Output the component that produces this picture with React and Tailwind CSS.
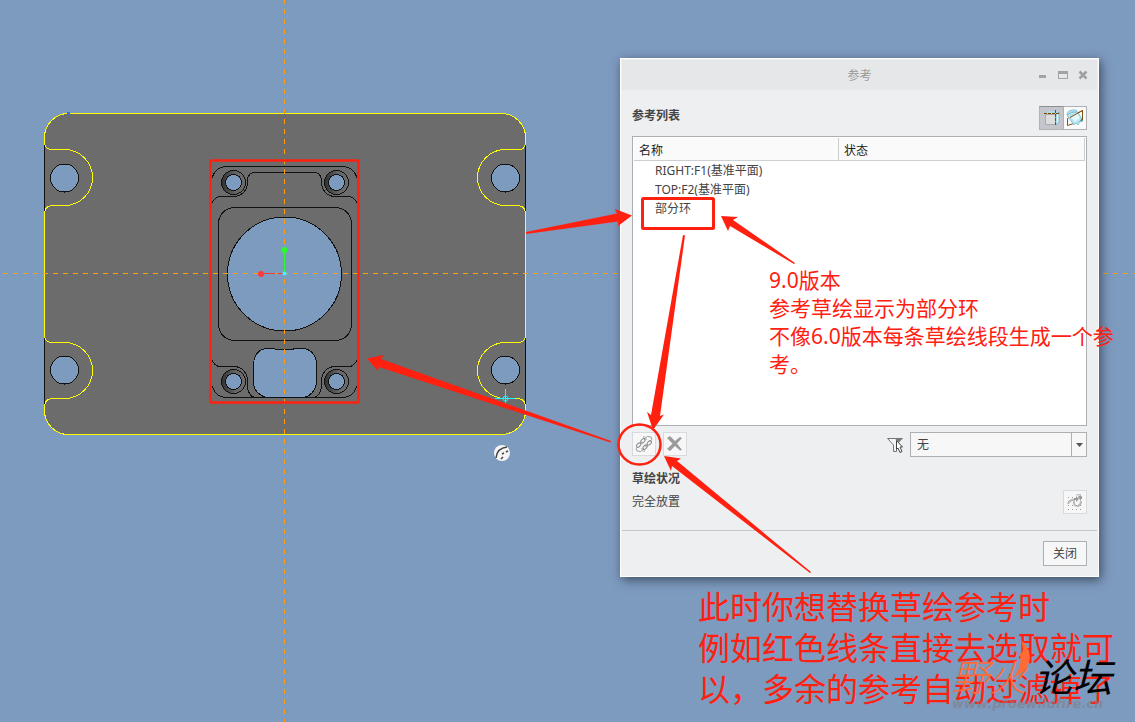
import { useState } from "react";

const references = [
  { name: "RIGHT:F1(基准平面)", status: "" },
  { name: "TOP:F2(基准平面)", status: "" },
  { name: "部分环", status: "" },
];

const SmallHole = ({ cx, cy }) => (
  <g stroke="#111111">
    <circle cx={cx} cy={cy} r="12" fill="url(#bore)" />
    <circle cx={cx} cy={cy} r="8" fill="#7d9abf" />
  </g>
);

// Left half of the inner part, the right half is the same path mirrored
const InnerHalf = () => (
  <g fill="none" stroke="#111111">
    <path d="M212 177.500Q216 166.500 226 166.500H285" />
    <path d="M212 203Q215 196.500 221 196.500H234A13.500 14 0 0 0 247.500 182.500V180Q248 172.500 255 172.500H285" />
    <path d="M212 360Q215 366.500 220 366.500H234A13.500 14 0 0 1 247.500 380.500V386Q248 396 255 397.500" />
    <path d="M212 386Q216 397.500 226 397.500H285" />
  </g>
);

const Plate = () => (
  <svg className="absolute left-0 top-0" width="1135" height="722" shapeRendering="crispEdges" aria-hidden="true">
    <defs>
      <linearGradient id="bore">
        <stop offset="0" stopColor="#303030" />
        <stop offset="0.6" stopColor="#666666" />
        <stop offset="1" stopColor="#6c6c6c" />
      </linearGradient>
    </defs>
    <rect x="44.5" y="113.5" width="481" height="321" rx="24" fill="#6c6c6c" stroke="#111111" />
    <g fill="#7d9abf" stroke="#111111">
      <circle cx="64.5" cy="178" r="14" />
      <circle cx="505.5" cy="178" r="14" />
      <circle cx="64.5" cy="370" r="14" />
      <circle cx="505.5" cy="370" r="14" />
    </g>
    <path
      d="M68.5 113.500H501.500A24 24 0 0 1 525.500 137.500V143Q525 149.500 519 149.500H505.500A28 28 0 0 0 505.500 205.500H518Q525 206 525.500 213V336Q525 342.500 518 342.500H505.500A28 28 0 0 0 505.500 398.500H518Q525 399 525.500 406V410.500A24 24 0 0 1 501.500 434.500H68.500A24 24 0 0 1 44.500 410.500V406Q45 399 52 398.500H64.500A28 28 0 0 0 64.500 342.500H52Q45 342 44.500 336V213Q45 206 52 205.500H64.500A28 28 0 0 0 64.500 149.500H52Q45 149 44.500 143V137.500A24 24 0 0 1 68.500 113.500Z"
      fill="none"
      stroke="#ffff00"
    />
    <path d="M67 112h3v3h-3z" fill="#4169e1" />

    <InnerHalf />
    <g transform="translate(569 0) scale(-1 1)">
      <InnerHalf />
    </g>
    <rect x="218.5" y="207.5" width="133" height="133" rx="16" fill="none" stroke="#111111" />
    <circle cx="284.5" cy="274" r="57" fill="#7d9abf" stroke="#111111" />
    <path
      d="M253.500 363Q255 350 266 348.500H272Q284 351 297 348.500H303Q315 350 316.500 363V384Q314 395 304 397.500H266Q255 394 253.500 384Z"
      fill="#7d9abf"
      stroke="#111111"
    />
    <SmallHole cx={233.5} cy={182.5} />
    <SmallHole cx={336.5} cy={182.5} />
    <SmallHole cx={233.5} cy={381.5} />
    <SmallHole cx={336.5} cy={381.5} />

    <g stroke="#ff9e0d" strokeDasharray="5 5">
      <path d="M284.500 -1V722" />
      <path d="M3 273.500H1135" />
    </g>
    <g shapeRendering="auto">
      <path d="M284.500 250V273" stroke="#2dfb2d" />
      <path d="M261 273.500H284" stroke="#fb3b3b" strokeDasharray="14 3" />
      <circle cx="284.500" cy="250" r="3" fill="#2dfb2d" />
      <circle cx="261" cy="274" r="3" fill="#fb3b3b" />
      <circle cx="284.500" cy="273.500" r="2" fill="#40f5ff" />
      <g fill="none" stroke="#22f2ff">
        <path d="M495 398.500H515M505.500 389V403" />
        <circle cx="505.500" cy="398.500" r="2.500" />
      </g>
      <circle cx="502" cy="453" r="8" fill="#f4f4f4" />
      <path d="M496 458Q497 448 507 447" fill="none" stroke="#444444" strokeWidth="1.500" />
      <path d="M501 459L503 457M502 454L504 453M506 452L508 451" stroke="#444444" strokeWidth="1.500" />
    </g>
  </svg>
);

const Markup = () => (
  <svg className="pointer-events-none absolute left-0 top-0" width="1135" height="722" aria-hidden="true">
    <g fill="none" stroke="#ff2010" strokeWidth="3" strokeLinejoin="round">
      <rect x="210.500" y="160.500" width="148" height="242" rx="1" strokeWidth="2.500" />
      <rect x="642.500" y="198.500" width="71" height="30" rx="1" />
      <ellipse cx="639.500" cy="444.500" rx="21" ry="20" strokeWidth="2.500" />
    </g>
    <g fill="#ff2010">
      <path d="M526 232L617 213.500L615 209L632 215.500L618 226L618 221.500L526 234Z" />
      <path d="M721 216L738 217L733 220L795 263L794 264L730 226L728 231Z" />
      <path d="M653 430L647 412L651 415L683 235L685 235.500L660 416L664 414.500Z" />
      <path d="M367 358.500L384 355L381 359L611 441L610.500 442.500L379 367L378 371Z" />
      <path d="M664 456L681 458.500L677 461L811 572L810 573L672 466L671 471Z" />
    </g>
  </svg>
);

const SketchRefIcon = () => (
  <svg width="18" height="18" viewBox="0 0 18 18" aria-hidden="true">
    <path d="M2 5L5 2H13L16 5V13L13 16Z" fill="#a9dcea" />
    <path d="M2.500 5.500H12.500V15.500H2.500Z" fill="#dddddd" stroke="#aaaaaa" />
    <path d="M13 6L16 3V13L13 16Z" fill="#d7f2f8" stroke="#5ba5bb" strokeWidth="0.600" />
    <path d="M1 4.500H17M12.500 1V17" stroke="#7a4b00" strokeDasharray="3 1" shapeRendering="crispEdges" />
  </svg>
);

const PlaneRefIcon = () => (
  <svg width="18" height="18" viewBox="0 0 18 18" aria-hidden="true">
    <path d="M1.500 9.500L16.500 1.500V11.500L1.500 16.500Z" fill="none" stroke="#80530f" />
    <path d="M1 5Q2 1 6 1H10L16 10V13L14 12L12 16L10 14L8 16L1 6Z" fill="#b5e5f2" stroke="#7ab9cc" strokeWidth="0.800" />
    <path d="M5 8L11 4L14 9L9 13Z" fill="#e3f8fc" />
    <path d="M1 6Q5 2 11 3" fill="none" stroke="#7ab9cc" />
    <path d="M4 8.500L16.500 1.500V11" fill="none" stroke="#80530f" />
    <path d="M14 12L16 9L16.500 12Z" fill="#2f8dab" />
  </svg>
);

const ReplaceIcon = () => (
  <svg width="18" height="18" viewBox="0 0 18 18" fill="none" stroke="#8b8b8b" aria-hidden="true">
    <g transform="rotate(-45 9 9)">
      <rect x="2" y="4.500" width="5" height="3" rx="1.500" />
      <rect x="8" y="4.500" width="5" height="3" rx="1.500" />
      <path d="M6 6H9M11 12H8" />
      <rect x="5" y="10.500" width="5" height="3" rx="1.500" />
      <rect x="11" y="10.500" width="5" height="3" rx="1.500" />
    </g>
    <path d="M9 4Q12 0 16 2Q18 4 15 7M9 1V4H12M9 14Q6 18 2 16Q0 14 2 12M9 17V14H6" strokeWidth="0.800" />
  </svg>
);

const RemoveIcon = () => (
  <svg width="16" height="16" viewBox="0 0 16 16" aria-hidden="true">
    <path d="M0 2L3 0L8 5L13 1L15 2L10 7.500L15 14L13 14.500L8 10L3 15L0 13L5.500 7.500Z" fill="#9b9b9b" />
  </svg>
);

const FilterIcon = () => (
  <svg width="18" height="18" viewBox="0 0 18 18" aria-hidden="true">
    <path d="M1.500 2.500H16L10.500 8V15.500H7.500V9Z" fill="#f4f4f4" stroke="#777777" />
    <path d="M8 2H17L13 6Z" fill="#777777" />
    <path d="M10.500 4.500L16.500 11H14L16 15.500L14 16.500L12 12L10.500 13.500Z" fill="#ffffff" stroke="#444444" />
  </svg>
);

const UpdateIcon = () => (
  <svg width="18" height="18" viewBox="0 0 18 18" aria-hidden="true">
    <path d="M2 4.500H9M2 8.500H6M2 12.500H17M2 16.500H17" stroke="#999999" strokeDasharray="1 3" />
    <path d="M2 11Q4 6 9 7M8 8Q7 13 12 13Q15 12 15 8" fill="none" stroke="#b8b8b8" strokeWidth="2" />
    <path d="M8 5H10V3L13 6L10 9V7H8ZM12 4L15 1V3H16V6H15V8Z" fill="#999999" />
    <path d="M10 2Q14 0 16 4" fill="none" stroke="#b8b8b8" />
  </svg>
);

const iconButton = "flex h-6 w-6 items-center justify-center border border-[#d7dade] bg-[#f7f7f7]";

const ReferencesDialog = () => {
  const [mode, setMode] = useState("sketch");

  return (
    <section
      aria-labelledby="dialog-title"
      className="absolute left-[620px] top-[58px] w-[479px] border border-white bg-[#eeeff1] p-px text-xs text-[#444444] shadow-[2px_3px_10px_rgba(0,0,0,0.5)]"
    >
      <header className="grid h-[30px] grid-cols-[1fr_auto_1fr] items-center bg-[#e6e7e8] text-[#999999]">
        <h1 id="dialog-title" className="col-start-2 pt-0.5">参考</h1>
        <div className="flex justify-end gap-1 pr-1.5">
          <button aria-label="最小化" className="flex h-4 w-4 items-center justify-center">
            <svg width="10" height="10"><path d="M1 5h7v3H1z" fill="#a3a3a3" /></svg>
          </button>
          <button aria-label="最大化" className="flex h-4 w-4 items-center justify-center">
            <svg width="10" height="10"><path d="M0 1h10v8H0zM1 4v4h8V4z" fill="#a3a3a3" fillRule="evenodd" /></svg>
          </button>
          <button aria-label="关闭窗口" className="flex h-4 w-4 items-center justify-center">
            <svg width="10" height="10"><path d="M1.500 1.500L8.500 8.500M8.500 1.500L1.500 8.500" stroke="#a0a0a0" strokeWidth="2.500" /></svg>
          </button>
        </div>
      </header>

      <div className="px-2.5 pt-4">
        <div className="flex items-start justify-between">
          <h2 id="list-title" className="font-bold leading-5">参考列表</h2>
          <div className="flex">
            <button
              aria-label="草绘参考"
              aria-pressed={mode === "sketch"}
              onClick={() => setMode("sketch")}
              className="flex h-6 w-[25px] items-center justify-center border border-[#b0b1b4] border-t-[#8f8f92] bg-[#c5c6cb]"
            >
              <SketchRefIcon />
            </button>
            <button
              aria-label="平面参考"
              aria-pressed={mode === "plane"}
              onClick={() => setMode("plane")}
              className="flex h-6 w-[23px] items-center justify-center border border-l-0 border-[#b0b1b4] bg-[#fafafa]"
            >
              <PlaneRefIcon />
            </button>
          </div>
        </div>

        <div className="mt-1.5 h-[290px] border border-[#adb0b3] bg-white p-px">
          <table aria-labelledby="list-title" className="w-full table-fixed border-separate border-spacing-0 text-left">
            <thead>
              <tr className="h-[23px] bg-[#fafafa] text-[#222222]">
                <th className="w-[205px] border-b border-r border-[#cccfd2] px-[5px] pt-1 font-normal">名称</th>
                <th className="border-b border-r border-[#cccfd2] px-[5px] pt-1 font-normal">状态</th>
              </tr>
            </thead>
            <tbody>
              {references.map((item) => (
                <tr key={item.name} className="h-[19px]">
                  <td className="pl-[21px]">{item.name}</td>
                  <td>{item.status}</td>
                </tr>
              ))}
            </tbody>
          </table>
        </div>

        <div className="mt-1.5 flex items-start justify-between">
          <div className="flex gap-[7px]">
            <button aria-label="替换" className={iconButton}>
              <ReplaceIcon />
            </button>
            <button aria-label="删除" className={iconButton}>
              <RemoveIcon />
            </button>
          </div>
          <div className="flex items-center gap-1.5">
            <label htmlFor="filter" aria-label="过滤器">
              <FilterIcon />
            </label>
            <div className="relative w-[177px]">
              <select
                id="filter"
                className="block h-[25px] w-full appearance-none rounded-none border border-[#adb0b3] bg-[#f7f7f7] pl-1.5"
              >
                <option>无</option>
              </select>
              <span className="pointer-events-none absolute inset-y-0 right-0 flex w-4 items-center justify-center border-x border-[#adb0b3]">
                <svg width="7" height="4"><path d="M0 0H7L3.500 4Z" fill="#555555" /></svg>
              </span>
            </div>
          </div>
        </div>

        <h2 className="mt-3 font-bold leading-5">草绘状况</h2>
        <div className="mt-px flex items-center justify-between">
          <p>完全放置</p>
          <button aria-label="更新" className={iconButton}>
            <UpdateIcon />
          </button>
        </div>
      </div>

      <footer className="mt-4 flex justify-end border-t border-[#c4c7ca] px-2.5 pb-[9px] pt-2.5">
        <button className="h-[25px] w-11 border border-[#adb0b3] bg-[#f7f7f7]">关闭</button>
      </footer>
    </section>
  );
};

const App = () => {
  return (
    <main className="relative min-h-screen overflow-hidden bg-[#7d9abf] font-['Noto_Sans','Noto_Sans_CJK_SC',sans-serif]">
      <Plate />
      <ReferencesDialog />
      <Markup />

      <p className="absolute left-[769px] top-[266px] whitespace-nowrap text-[21px] leading-7 text-[#ff2010]">
        9.0版本
        <br />
        参考草绘显示为部分环
        <br />
        不像6.0版本每条草绘线段生成一个参
        <br />
        考。
      </p>
      <p className="absolute left-[698px] top-[586px] whitespace-nowrap text-[32px] leading-[41px] text-[#ff2010]">
        此时你想替换草绘参考时
        <br />
        例如红色线条直接去选取就可
        <br />
        以，多余的参考自动过滤掉了
      </p>

      <div className="absolute left-[952px] top-[656px] whitespace-nowrap">
        <div className="flex items-center gap-2 leading-[42px]">
          <span className="text-[37px] font-light italic text-[#ff6a35]">野火</span>
          <span className="text-[39px] italic text-black">论坛</span>
        </div>
        <svg className="absolute left-[60px] top-[-16px]" width="20" height="40" aria-hidden="true">
          <path d="M9 0C24 14 19 30 1 38C9 28 10 20 7 13C11 15 12 9 9 0Z" fill="#ff6a35" />
        </svg>
        <p className="font-['DejaVu_Sans'] text-[13px] font-bold italic leading-3 text-[#807f88]/60">www.proewildfire.cn</p>
      </div>
    </main>
  );
};

export default App;
